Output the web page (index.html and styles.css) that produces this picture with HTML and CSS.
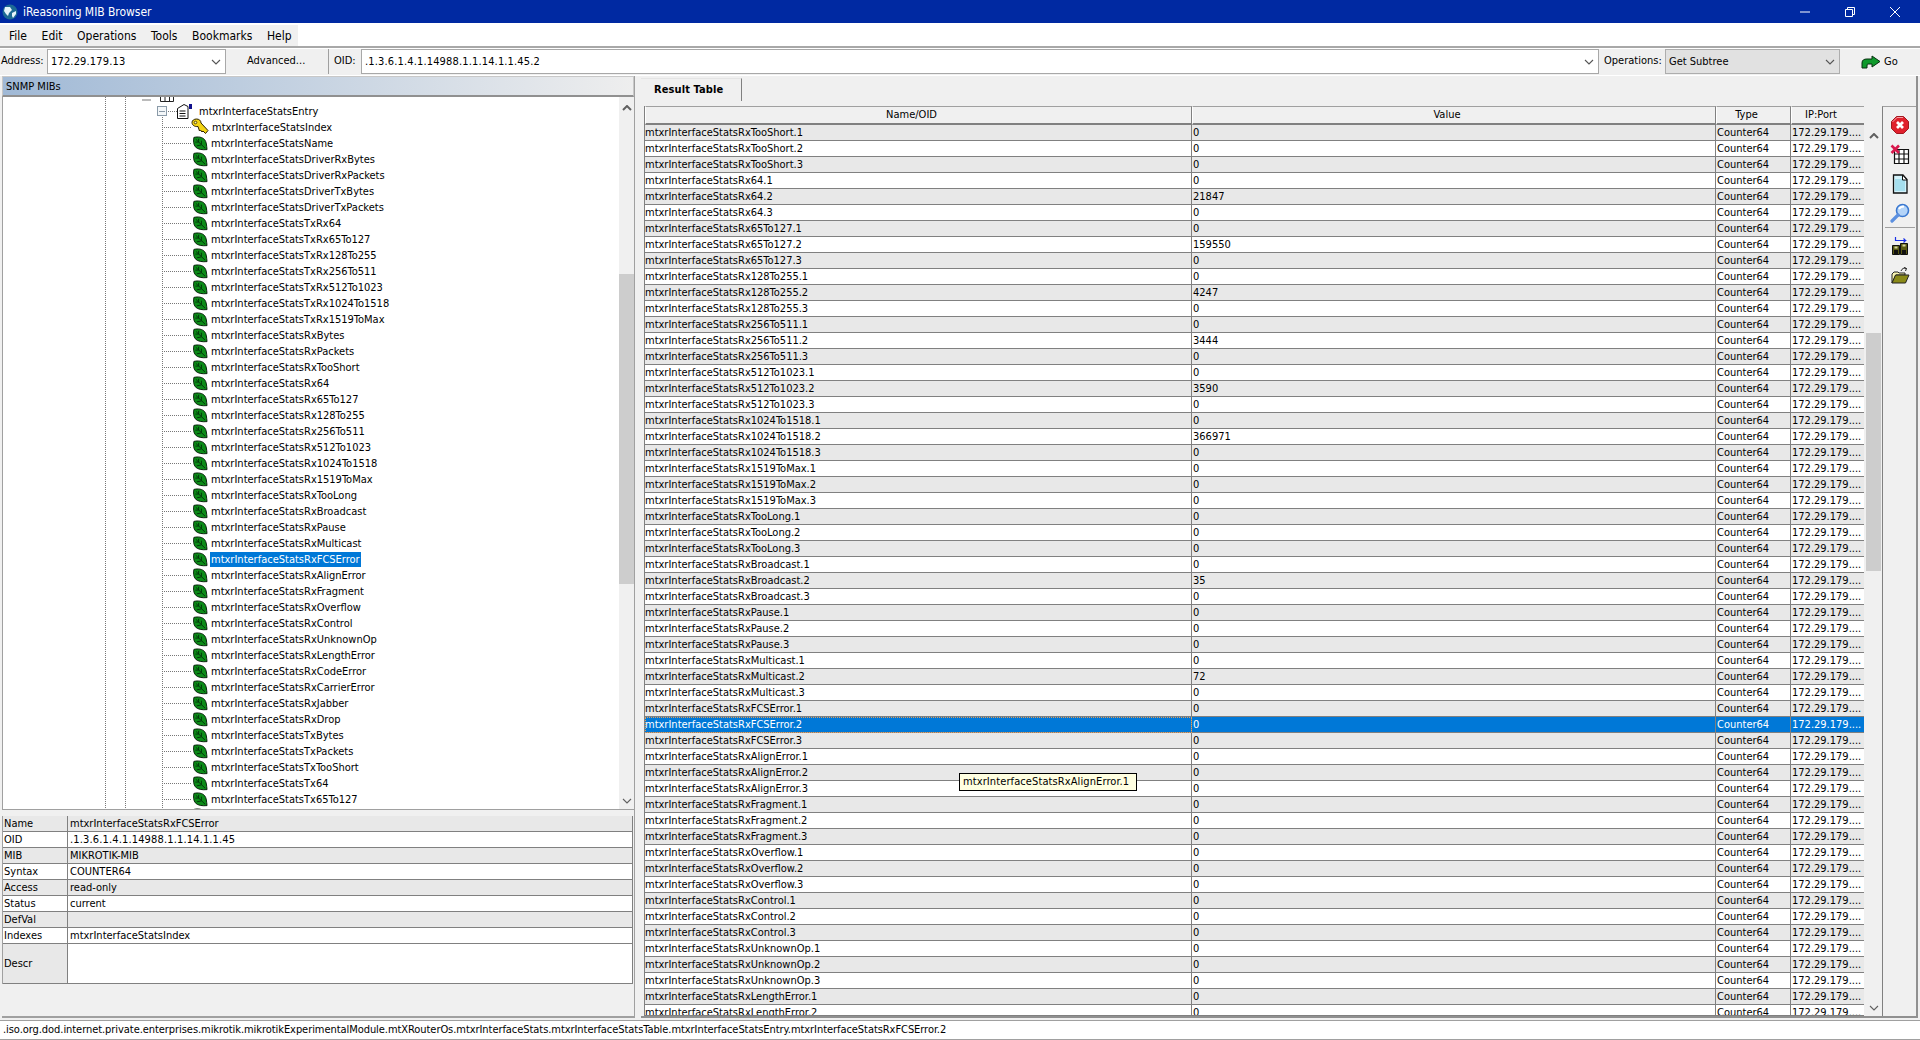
FILE: index.html
```html
<!DOCTYPE html>
<html lang="en">
<head>
<meta charset="utf-8">
<title>iReasoning MIB Browser</title>
<link rel="stylesheet" href="styles.css">
</head>
<body>
<svg class="defs" width="0" height="0" aria-hidden="true">
<symbol id="leaf" viewBox="0 0 16 16"><path d="M1.500 1.500C6 .5 10.500 1 13 4c2 2.500 2 6 2.500 10.500C10.500 15 5.500 14.500 3 11.500 1 9 .8 5 1.500 1.500Z" fill="#0c8c18" stroke="#021a05"/><path d="M3.500 3.500l10 9.500M6.500 6.500V3M9.500 9V5M6.500 6.500H3M9.500 9.500l-5 1" stroke="#02340a" fill="none"/></symbol>
<symbol id="key" viewBox="0 0 18 18"><path d="M1 4.500C1 2.500 3 1 5.500 1S10 2.500 10 5l7 7.500-2.500 3L12 13l-1 1-1.500-2-1 1-1.500-4.500C3.500 9 1 7 1 4.500Z" fill="#f3d413" stroke="#2a2000"/><circle cx="4.500" cy="4.500" r="1.300" fill="#fff8b0" stroke="#5c4a00"/></symbol>
<symbol id="down" viewBox="0 0 10 6"><path d="M1 1l4 4 4-4" fill="none" stroke="currentColor" stroke-width="1.100"/></symbol>
<symbol id="up" viewBox="0 0 10 6"><path d="M1 5l4-4 4 4" fill="none" stroke="currentColor" stroke-width="2"/></symbol>
</svg>

<header class="titlebar">
<svg class="app-icon" viewBox="0 0 16 16"><circle cx="8" cy="8" r="7.500" fill="#1d6a94"/><path d="M3 3l5 0 2 3-3 3-1 3-2-2-2-3zM10 9l4-2 0 3-3 4-1-2z" fill="#e6f4fa"/></svg>
<span class="title-text">iReasoning MIB Browser</span>
<div class="winctl">
<svg viewBox="0 0 12 12"><path d="M1 6h10" stroke="#fff" fill="none"/></svg>
<svg viewBox="0 0 12 12"><path d="M1.500 3.500h7v7h-7zM3.500 3.500v-2h7v7h-2" stroke="#fff" fill="none"/></svg>
<svg viewBox="0 0 12 12"><path d="M1 1l10 10M11 1L1 11" stroke="#fff" fill="none"/></svg>
</div>
</header>

<nav class="menubar">
<div class="menu"><span>File</span><span>Edit</span><span>Operations</span><span>Tools</span><span>Bookmarks</span><span>Help</span></div>
</nav>

<section class="toolbar">
<label class="lbl addr-lbl">Address:</label>
<div class="combo addr"><span class="spaced">172.29.179.13</span><svg class="chev"><use href="#down"/></svg></div>
<div class="advanced">Advanced...</div>
<div class="divider"></div>
<label class="lbl oid-lbl">OID:</label>
<div class="combo oid"><span class="spaced">.1.3.6.1.4.1.14988.1.1.14.1.1.45.2</span><svg class="chev"><use href="#down"/></svg></div>
<label class="lbl ops-lbl">Operations:</label>
<div class="combo ops"><span>Get Subtree</span><svg class="chev"><use href="#down"/></svg></div>
<div class="go">
<svg viewBox="0 0 20 14"><path d="M1 13V8c0-3 2-4 5-4h5V1l8 5.500-8 5.500V9H7c-1 0-1 1-1 4Z" fill="#0f9a2c" stroke="#06300f"/></svg>
<span>Go</span>
</div>
</section>

<main class="main">
<section class="left">
<div class="panel-title">SNMP MIBs</div>
<div class="tree-wrap">
<div class="tree">
<div class="node cut"><span class="minus"></span><svg class="tbl" viewBox="0 0 14 14"><path d="M.5.5h13v13H.5zM.5 7h13M5 .5v13M9.500.5v13" fill="#fff" stroke="#222"/></svg></div>
<div class="node entry"><span class="exp"></span><svg class="entry-ico" viewBox="0 0 18 16"><path d="M1.500 5.500L8 1.500l4 2v12H1.500Z" fill="#fff" stroke="#111"/><path d="M3.500 8h6M3.500 10.500h6M3.500 13h6" stroke="#111"/><path d="M13 1h3v5h-3Z" fill="#10108c"/></svg><span class="nm">mtxrInterfaceStatsEntry</span></div>
<div class="node"><svg class="key"><use href="#key"/></svg><span class="nm idx">mtxrInterfaceStatsIndex</span></div>
<div class="node"><svg class="leaf"><use href="#leaf"/></svg><span class="nm">mtxrInterfaceStatsName</span></div>
<div class="node"><svg class="leaf"><use href="#leaf"/></svg><span class="nm">mtxrInterfaceStatsDriverRxBytes</span></div>
<div class="node"><svg class="leaf"><use href="#leaf"/></svg><span class="nm">mtxrInterfaceStatsDriverRxPackets</span></div>
<div class="node"><svg class="leaf"><use href="#leaf"/></svg><span class="nm">mtxrInterfaceStatsDriverTxBytes</span></div>
<div class="node"><svg class="leaf"><use href="#leaf"/></svg><span class="nm">mtxrInterfaceStatsDriverTxPackets</span></div>
<div class="node"><svg class="leaf"><use href="#leaf"/></svg><span class="nm">mtxrInterfaceStatsTxRx64</span></div>
<div class="node"><svg class="leaf"><use href="#leaf"/></svg><span class="nm">mtxrInterfaceStatsTxRx65To127</span></div>
<div class="node"><svg class="leaf"><use href="#leaf"/></svg><span class="nm">mtxrInterfaceStatsTxRx128To255</span></div>
<div class="node"><svg class="leaf"><use href="#leaf"/></svg><span class="nm">mtxrInterfaceStatsTxRx256To511</span></div>
<div class="node"><svg class="leaf"><use href="#leaf"/></svg><span class="nm">mtxrInterfaceStatsTxRx512To1023</span></div>
<div class="node"><svg class="leaf"><use href="#leaf"/></svg><span class="nm">mtxrInterfaceStatsTxRx1024To1518</span></div>
<div class="node"><svg class="leaf"><use href="#leaf"/></svg><span class="nm">mtxrInterfaceStatsTxRx1519ToMax</span></div>
<div class="node"><svg class="leaf"><use href="#leaf"/></svg><span class="nm">mtxrInterfaceStatsRxBytes</span></div>
<div class="node"><svg class="leaf"><use href="#leaf"/></svg><span class="nm">mtxrInterfaceStatsRxPackets</span></div>
<div class="node"><svg class="leaf"><use href="#leaf"/></svg><span class="nm">mtxrInterfaceStatsRxTooShort</span></div>
<div class="node"><svg class="leaf"><use href="#leaf"/></svg><span class="nm">mtxrInterfaceStatsRx64</span></div>
<div class="node"><svg class="leaf"><use href="#leaf"/></svg><span class="nm">mtxrInterfaceStatsRx65To127</span></div>
<div class="node"><svg class="leaf"><use href="#leaf"/></svg><span class="nm">mtxrInterfaceStatsRx128To255</span></div>
<div class="node"><svg class="leaf"><use href="#leaf"/></svg><span class="nm">mtxrInterfaceStatsRx256To511</span></div>
<div class="node"><svg class="leaf"><use href="#leaf"/></svg><span class="nm">mtxrInterfaceStatsRx512To1023</span></div>
<div class="node"><svg class="leaf"><use href="#leaf"/></svg><span class="nm">mtxrInterfaceStatsRx1024To1518</span></div>
<div class="node"><svg class="leaf"><use href="#leaf"/></svg><span class="nm">mtxrInterfaceStatsRx1519ToMax</span></div>
<div class="node"><svg class="leaf"><use href="#leaf"/></svg><span class="nm">mtxrInterfaceStatsRxTooLong</span></div>
<div class="node"><svg class="leaf"><use href="#leaf"/></svg><span class="nm">mtxrInterfaceStatsRxBroadcast</span></div>
<div class="node"><svg class="leaf"><use href="#leaf"/></svg><span class="nm">mtxrInterfaceStatsRxPause</span></div>
<div class="node"><svg class="leaf"><use href="#leaf"/></svg><span class="nm">mtxrInterfaceStatsRxMulticast</span></div>
<div class="node"><svg class="leaf"><use href="#leaf"/></svg><span class="nm sel">mtxrInterfaceStatsRxFCSError</span></div>
<div class="node"><svg class="leaf"><use href="#leaf"/></svg><span class="nm">mtxrInterfaceStatsRxAlignError</span></div>
<div class="node"><svg class="leaf"><use href="#leaf"/></svg><span class="nm">mtxrInterfaceStatsRxFragment</span></div>
<div class="node"><svg class="leaf"><use href="#leaf"/></svg><span class="nm">mtxrInterfaceStatsRxOverflow</span></div>
<div class="node"><svg class="leaf"><use href="#leaf"/></svg><span class="nm">mtxrInterfaceStatsRxControl</span></div>
<div class="node"><svg class="leaf"><use href="#leaf"/></svg><span class="nm">mtxrInterfaceStatsRxUnknownOp</span></div>
<div class="node"><svg class="leaf"><use href="#leaf"/></svg><span class="nm">mtxrInterfaceStatsRxLengthError</span></div>
<div class="node"><svg class="leaf"><use href="#leaf"/></svg><span class="nm">mtxrInterfaceStatsRxCodeError</span></div>
<div class="node"><svg class="leaf"><use href="#leaf"/></svg><span class="nm">mtxrInterfaceStatsRxCarrierError</span></div>
<div class="node"><svg class="leaf"><use href="#leaf"/></svg><span class="nm">mtxrInterfaceStatsRxJabber</span></div>
<div class="node"><svg class="leaf"><use href="#leaf"/></svg><span class="nm">mtxrInterfaceStatsRxDrop</span></div>
<div class="node"><svg class="leaf"><use href="#leaf"/></svg><span class="nm">mtxrInterfaceStatsTxBytes</span></div>
<div class="node"><svg class="leaf"><use href="#leaf"/></svg><span class="nm">mtxrInterfaceStatsTxPackets</span></div>
<div class="node"><svg class="leaf"><use href="#leaf"/></svg><span class="nm">mtxrInterfaceStatsTxTooShort</span></div>
<div class="node"><svg class="leaf"><use href="#leaf"/></svg><span class="nm">mtxrInterfaceStatsTx64</span></div>
<div class="node"><svg class="leaf"><use href="#leaf"/></svg><span class="nm">mtxrInterfaceStatsTx65To127</span></div>
<div class="node"><svg class="leaf"><use href="#leaf"/></svg></div>
</div>
<div class="vscroll tree-scroll"><svg class="arrow"><use href="#up"/></svg><div class="track"><div class="thumb"></div></div><svg class="arrow"><use href="#down"/></svg></div>
</div>
<div class="split"></div>
<table class="props">
<tr><th>Name</th><td>mtxrInterfaceStatsRxFCSError</td></tr>
<tr><th>OID</th><td><span class="spaced">.1.3.6.1.4.1.14988.1.1.14.1.1.45</span></td></tr>
<tr><th>MIB</th><td>MIKROTIK-MIB</td></tr>
<tr><th>Syntax</th><td>COUNTER64</td></tr>
<tr><th>Access</th><td>read-only</td></tr>
<tr><th>Status</th><td>current</td></tr>
<tr><th>DefVal</th><td></td></tr>
<tr><th>Indexes</th><td>mtxrInterfaceStatsIndex</td></tr>
<tr class="descr"><th>Descr</th><td></td></tr>
</table>
</section>

<section class="right">
<div class="tabs"><div class="tab">Result Table</div></div>
<div class="result">
<div class="tbl-clip">
<table class="results">
<colgroup><col class="c1"><col class="c2"><col class="c3"><col class="c4"></colgroup>
<thead><tr><th>Name/OID</th><th>Value</th><th>Type</th><th>IP:Port</th></tr></thead>
<tbody>
<tr><td>mtxrInterfaceStatsRxTooShort.1</td><td>0</td><td>Counter64</td><td>172.29.179....</td></tr>
<tr><td>mtxrInterfaceStatsRxTooShort.2</td><td>0</td><td>Counter64</td><td>172.29.179....</td></tr>
<tr><td>mtxrInterfaceStatsRxTooShort.3</td><td>0</td><td>Counter64</td><td>172.29.179....</td></tr>
<tr><td>mtxrInterfaceStatsRx64.1</td><td>0</td><td>Counter64</td><td>172.29.179....</td></tr>
<tr><td>mtxrInterfaceStatsRx64.2</td><td>21847</td><td>Counter64</td><td>172.29.179....</td></tr>
<tr><td>mtxrInterfaceStatsRx64.3</td><td>0</td><td>Counter64</td><td>172.29.179....</td></tr>
<tr><td>mtxrInterfaceStatsRx65To127.1</td><td>0</td><td>Counter64</td><td>172.29.179....</td></tr>
<tr><td>mtxrInterfaceStatsRx65To127.2</td><td>159550</td><td>Counter64</td><td>172.29.179....</td></tr>
<tr><td>mtxrInterfaceStatsRx65To127.3</td><td>0</td><td>Counter64</td><td>172.29.179....</td></tr>
<tr><td>mtxrInterfaceStatsRx128To255.1</td><td>0</td><td>Counter64</td><td>172.29.179....</td></tr>
<tr><td>mtxrInterfaceStatsRx128To255.2</td><td>4247</td><td>Counter64</td><td>172.29.179....</td></tr>
<tr><td>mtxrInterfaceStatsRx128To255.3</td><td>0</td><td>Counter64</td><td>172.29.179....</td></tr>
<tr><td>mtxrInterfaceStatsRx256To511.1</td><td>0</td><td>Counter64</td><td>172.29.179....</td></tr>
<tr><td>mtxrInterfaceStatsRx256To511.2</td><td>3444</td><td>Counter64</td><td>172.29.179....</td></tr>
<tr><td>mtxrInterfaceStatsRx256To511.3</td><td>0</td><td>Counter64</td><td>172.29.179....</td></tr>
<tr><td>mtxrInterfaceStatsRx512To1023.1</td><td>0</td><td>Counter64</td><td>172.29.179....</td></tr>
<tr><td>mtxrInterfaceStatsRx512To1023.2</td><td>3590</td><td>Counter64</td><td>172.29.179....</td></tr>
<tr><td>mtxrInterfaceStatsRx512To1023.3</td><td>0</td><td>Counter64</td><td>172.29.179....</td></tr>
<tr><td>mtxrInterfaceStatsRx1024To1518.1</td><td>0</td><td>Counter64</td><td>172.29.179....</td></tr>
<tr><td>mtxrInterfaceStatsRx1024To1518.2</td><td>366971</td><td>Counter64</td><td>172.29.179....</td></tr>
<tr><td>mtxrInterfaceStatsRx1024To1518.3</td><td>0</td><td>Counter64</td><td>172.29.179....</td></tr>
<tr><td>mtxrInterfaceStatsRx1519ToMax.1</td><td>0</td><td>Counter64</td><td>172.29.179....</td></tr>
<tr><td>mtxrInterfaceStatsRx1519ToMax.2</td><td>0</td><td>Counter64</td><td>172.29.179....</td></tr>
<tr><td>mtxrInterfaceStatsRx1519ToMax.3</td><td>0</td><td>Counter64</td><td>172.29.179....</td></tr>
<tr><td>mtxrInterfaceStatsRxTooLong.1</td><td>0</td><td>Counter64</td><td>172.29.179....</td></tr>
<tr><td>mtxrInterfaceStatsRxTooLong.2</td><td>0</td><td>Counter64</td><td>172.29.179....</td></tr>
<tr><td>mtxrInterfaceStatsRxTooLong.3</td><td>0</td><td>Counter64</td><td>172.29.179....</td></tr>
<tr><td>mtxrInterfaceStatsRxBroadcast.1</td><td>0</td><td>Counter64</td><td>172.29.179....</td></tr>
<tr><td>mtxrInterfaceStatsRxBroadcast.2</td><td>35</td><td>Counter64</td><td>172.29.179....</td></tr>
<tr><td>mtxrInterfaceStatsRxBroadcast.3</td><td>0</td><td>Counter64</td><td>172.29.179....</td></tr>
<tr><td>mtxrInterfaceStatsRxPause.1</td><td>0</td><td>Counter64</td><td>172.29.179....</td></tr>
<tr><td>mtxrInterfaceStatsRxPause.2</td><td>0</td><td>Counter64</td><td>172.29.179....</td></tr>
<tr><td>mtxrInterfaceStatsRxPause.3</td><td>0</td><td>Counter64</td><td>172.29.179....</td></tr>
<tr><td>mtxrInterfaceStatsRxMulticast.1</td><td>0</td><td>Counter64</td><td>172.29.179....</td></tr>
<tr><td>mtxrInterfaceStatsRxMulticast.2</td><td>72</td><td>Counter64</td><td>172.29.179....</td></tr>
<tr><td>mtxrInterfaceStatsRxMulticast.3</td><td>0</td><td>Counter64</td><td>172.29.179....</td></tr>
<tr><td>mtxrInterfaceStatsRxFCSError.1</td><td>0</td><td>Counter64</td><td>172.29.179....</td></tr>
<tr class="selected"><td class="focus">mtxrInterfaceStatsRxFCSError.2</td><td>0</td><td>Counter64</td><td>172.29.179....</td></tr>
<tr><td>mtxrInterfaceStatsRxFCSError.3</td><td>0</td><td>Counter64</td><td>172.29.179....</td></tr>
<tr><td>mtxrInterfaceStatsRxAlignError.1</td><td>0</td><td>Counter64</td><td>172.29.179....</td></tr>
<tr><td>mtxrInterfaceStatsRxAlignError.2</td><td>0</td><td>Counter64</td><td>172.29.179....</td></tr>
<tr><td>mtxrInterfaceStatsRxAlignError.3</td><td>0</td><td>Counter64</td><td>172.29.179....</td></tr>
<tr><td>mtxrInterfaceStatsRxFragment.1</td><td>0</td><td>Counter64</td><td>172.29.179....</td></tr>
<tr><td>mtxrInterfaceStatsRxFragment.2</td><td>0</td><td>Counter64</td><td>172.29.179....</td></tr>
<tr><td>mtxrInterfaceStatsRxFragment.3</td><td>0</td><td>Counter64</td><td>172.29.179....</td></tr>
<tr><td>mtxrInterfaceStatsRxOverflow.1</td><td>0</td><td>Counter64</td><td>172.29.179....</td></tr>
<tr><td>mtxrInterfaceStatsRxOverflow.2</td><td>0</td><td>Counter64</td><td>172.29.179....</td></tr>
<tr><td>mtxrInterfaceStatsRxOverflow.3</td><td>0</td><td>Counter64</td><td>172.29.179....</td></tr>
<tr><td>mtxrInterfaceStatsRxControl.1</td><td>0</td><td>Counter64</td><td>172.29.179....</td></tr>
<tr><td>mtxrInterfaceStatsRxControl.2</td><td>0</td><td>Counter64</td><td>172.29.179....</td></tr>
<tr><td>mtxrInterfaceStatsRxControl.3</td><td>0</td><td>Counter64</td><td>172.29.179....</td></tr>
<tr><td>mtxrInterfaceStatsRxUnknownOp.1</td><td>0</td><td>Counter64</td><td>172.29.179....</td></tr>
<tr><td>mtxrInterfaceStatsRxUnknownOp.2</td><td>0</td><td>Counter64</td><td>172.29.179....</td></tr>
<tr><td>mtxrInterfaceStatsRxUnknownOp.3</td><td>0</td><td>Counter64</td><td>172.29.179....</td></tr>
<tr><td>mtxrInterfaceStatsRxLengthError.1</td><td>0</td><td>Counter64</td><td>172.29.179....</td></tr>
<tr><td>mtxrInterfaceStatsRxLengthError.2</td><td>0</td><td>Counter64</td><td>172.29.179....</td></tr>
</tbody>
</table>
<div class="tooltip">mtxrInterfaceStatsRxAlignError.1</div>
</div>
<div class="vscroll tbl-scroll"><svg class="arrow"><use href="#up"/></svg><div class="track"><div class="thumb"></div></div><svg class="arrow"><use href="#down"/></svg></div>
<aside class="tools">
<svg viewBox="0 0 20 20"><path d="M6.500 1.500h7l5 5v7l-5 5h-7l-5-5v-7Z" fill="#e0202c" stroke="#a01820"/><path d="M2.500 7l4.500-4.500h6" stroke="#f4a0a4" fill="none"/><path d="M7 7l6 6M13 7l-6 6" stroke="#fff" stroke-width="2.800"/></svg>
<svg viewBox="0 0 20 20"><path d="M4.500 5.500h14v14h-14zM4.500 10h14M4.500 15h14M9 5.500v14M14 5.500v14" fill="#fff" stroke="#111" stroke-width="1.200"/><path d="M1.500 1.500l7.500 7.500M9 1.500L1.500 9" stroke="#d8184c" stroke-width="2.600"/></svg>
<svg viewBox="0 0 20 20"><path d="M3.500 1h9.500l4 4.500V19H3.500Z" fill="#d4f2fa" stroke="#111" stroke-width="1.300"/><path d="M5 6h10M5 8h10M5 10h10M5 12h10M5 14h10M5 16h10" stroke="#78cce2"/><path d="M12.500 1v5H17Z" fill="#fff" stroke="#111"/></svg>
<svg viewBox="0 0 20 20"><circle cx="12.500" cy="7.500" r="6" fill="#b4d4f8" stroke="#3a78d0" stroke-width="1.600"/><path d="M9 6c1-2 3-2.500 5-2.500" stroke="#fff" stroke-width="1.800" fill="none"/><path d="M8 12l-6 6" stroke="#5c90e0" stroke-width="3.200" stroke-linecap="round"/></svg>
<div class="tool-sep"></div>
<svg viewBox="0 0 20 20"><path d="M2.500 9.500h7v9h-7zM10.500 7.500h7v11h-7z" fill="#5a5a14" stroke="#111"/><path d="M4 14h4v4H4zM12 14h4v4h-4z" fill="#111"/><path d="M4.500 10.500h3v2h-3zM12.500 8.500h3v2h-3z" fill="#d8d8a0"/><path d="M5.500 1v3.500h10l-2-2M15.500 4.500l-2 2" stroke="#1a30e8" fill="none" stroke-width="1.200"/></svg>
<svg viewBox="0 0 20 20"><path d="M2 8l2-2h4l1 1h6v2H6L2 17Z" fill="#f8f4b0" stroke="#222"/><path d="M2 17l3.500-8H19l-3.500 8Z" fill="#8a8a18" stroke="#222"/><path d="M11 5c1-2.500 3-3.500 5.500-2.500M16.500 2.500l-1 2.500M16.500 2.500L14 1.500" stroke="#222" fill="none"/></svg>
</aside>
</div>
</section>
</main>

<footer class="status"><span>.iso.org.dod.internet.private.enterprises.mikrotik.mikrotikExperimentalModule.mtXRouterOs.mtxrInterfaceStats.mtxrInterfaceStatsTable.mtxrInterfaceStatsEntry.mtxrInterfaceStatsRxFCSError.2</span></footer>
</body>
</html>
```

FILE: styles.css
```css
* { box-sizing: border-box; }
html, body { margin: 0; padding: 0; }
body {
  width: 1920px;
  height: 1040px;
  overflow: hidden;
  display: flex;
  flex-direction: column;
  background: #f0f0f0;
  color: #000;
  font-family: "DejaVu Sans Condensed", "DejaVu Sans", sans-serif;
  font-size: 11px;
  line-height: 16px;
}
.defs { position: absolute; }
.spaced { letter-spacing: .15px; }

.titlebar {
  height: 23px;
  flex: none;
  background: #0029a2;
  color: #fff;
  display: flex;
  align-items: center;
  padding-left: 2px;
  font-size: 12px;
}
.app-icon { width: 16px; height: 16px; margin-right: 5px; }
.title-text { flex: 1; letter-spacing: -.05px; }
.winctl { display: flex; gap: 33px; padding-right: 19px; }
.winctl svg { width: 12px; height: 12px; }

.menubar {
  height: 26px;
  flex: none;
  background: #fff;
  padding-top: 2px;
  border-bottom: 1px solid #fff;
  box-shadow: inset 0 -2px 0 #a8a8a8;
}
.menu {
  width: 298px;
  height: 21px;
  background: #f0f0f0;
  display: flex;
  align-items: center;
  padding-left: 9px;
  gap: 14.6px;
  font-size: 12px;
}

.toolbar {
  height: 27px;
  flex: none;
  display: flex;
  align-items: stretch;
  background: #f0f0f0;
  font-size: 11px;
  border-bottom: 1px solid #fff;
}
.lbl { line-height: 24px; }
.addr-lbl { width: 47px; padding-left: 1px; }
.combo {
  display: flex;
  align-items: center;
  justify-content: space-between;
  height: 25px;
  background: #fff;
  border: 1px solid #a8a8a8;
  padding: 0 4px 0 3px;
}
.chev { width: 10px; height: 6px; color: #555; }
.addr { width: 179px; }
.advanced { width: 102px; padding-left: 21px; line-height: 24px; }
.divider { width: 1px; height: 25px; background: #a0a0a0; }
.oid-lbl { width: 32px; padding-left: 5px; }
.oid { width: 1238px; }
.ops-lbl { width: 66px; padding-left: 5px; }
.ops { width: 175px; background: #e1e1e1; border-color: #adadad; }
.go { display: flex; align-items: center; gap: 3px; padding-left: 21px; height: 25px; }
.go svg { width: 20px; height: 14px; }

.main {
  flex: none;
  height: 944px;
  display: flex;
  align-items: stretch;
  padding: 0 2px 2px 2px;
}

.left {
  width: 633px;
  display: flex;
  flex-direction: column;
  border-bottom: 2px solid #a0a0a0;
  border-right: 1px solid #a0a0a0;
}
.panel-title {
  height: 21px;
  flex: none;
  padding-left: 3px;
  line-height: 20px;
  background: linear-gradient(to right, #a0b9d6, #eeeeee);
  border: 1px solid #c8c8c8;
  border-bottom: 2px solid #909090;
}
.tree-wrap {
  height: 713px;
  flex: none;
  display: flex;
  background: #fff;
  border-left: 1px solid #a0a0a0;
  border-bottom: 1px solid #a0a0a0;
  overflow: hidden;
}
.tree {
  flex: 1;
  overflow: hidden;
  background-image:
    repeating-linear-gradient(to bottom, #777 0 1px, transparent 1px 2px),
    repeating-linear-gradient(to bottom, #777 0 1px, transparent 1px 2px),
    repeating-linear-gradient(to bottom, #777 0 1px, transparent 1px 2px);
  background-size: 1px 100%;
  background-repeat: no-repeat;
  background-position: 102px 0, 122px 0, 159px 14px;
}
.node {
  height: 16px;
  display: flex;
  align-items: center;
  padding-left: 159px;
  background-image: repeating-linear-gradient(to right, #777 0 1px, transparent 1px 2px);
  background-size: 30px 1px;
  background-position: 159px 8px;
  background-repeat: no-repeat;
  white-space: nowrap;
}
.cut {
  margin-top: -10px;
  background: none;
  padding-left: 139px;
}
.minus { width: 9px; height: 2px; background: #bbb; margin: 10px 9px 0 0; }
.tbl { width: 14px; height: 14px; }
.entry {
  background-size: 12px 1px;
  background-position: 165px 8px;
  padding-left: 154px;
}
.exp {
  width: 10px;
  height: 10px;
  flex: none;
  background: linear-gradient(#8a9aa8, #8a9aa8) center / 6px 1px no-repeat, #f4f7f9;
  border: 1px solid #8a9aa8;
  margin-right: 9px;
}
.entry-ico { width: 18px; height: 16px; flex: none; margin-right: 3px; }
.leaf { width: 16px; height: 15px; flex: none; margin: 0 0 0 30px; }
.key { width: 18px; height: 18px; flex: none; margin: 0 0 0 29px; }
.nm { padding: 0 1px; margin-left: 2px; line-height: 15px; }
.entry .nm { margin-left: 1px; }
.idx { margin-left: 2px; }
.sel { background: #0078d7; color: #fff; }

.vscroll {
  flex: none;
  display: flex;
  flex-direction: column;
  align-items: stretch;
  background: #f0f0f0;
}
.arrow { width: 10px; height: 6px; color: #606060; align-self: center; margin: 8px 0 5px; flex: none; }
.track { flex: 1; }
.thumb { background: #cdcdcd; }
.tree-scroll { width: 15px; }
.tree-scroll .thumb { margin-top: 158px; height: 310px; }
.tbl-scroll { width: 18px; padding-right: 1px; padding-left: 2px; margin-top: 19px; }
.tbl-scroll .arrow { color: #606060; }
.tbl-scroll .thumb { margin-top: 189px; height: 238px; }

.split { height: 6px; flex: none; background: #f0f0f0; }

.props {
  flex: none;
  width: 631px;
  margin-left: 0;
  border-collapse: separate;
  border-spacing: 0;
  table-layout: fixed;
  background: #fff;
  border-left: 1px solid #a0a0a0;
}
.props th, .props td {
  height: 16px;
  padding: 0;
  font-weight: normal;
  text-align: left;
  border-bottom: 1px solid #808080;
  border-right: 1px solid #808080;
  line-height: 15px;
  overflow: hidden;
  white-space: nowrap;
}
.props th { width: 65px; padding-left: 1px; }
.props td { padding-left: 2px; }
.props tr:nth-child(odd) th, .props tr:nth-child(odd) td { background: #e8e8e8; }
.props tr.descr th { background: #e8e8e8; height: 40px; }
.props tr.descr td { background: #fff; }

.right {
  flex: 1;
  min-width: 0;
  display: flex;
  flex-direction: column;
  margin-left: 6px;
  border-right: 2px solid #909090;
  border-bottom: 2px solid #909090;
}
.tabs { height: 30px; flex: none; padding-top: 2px; }
.tab {
  width: 101px;
  height: 23px;
  line-height: 21px;
  padding-left: 13px;
  font-weight: bold;
  letter-spacing: .1px;
  border-right: 1px solid #808080;
  border-top: 1px solid #e4e4e4;
}
.result { flex: 1; min-height: 0; display: flex; }
.tbl-clip {
  position: relative;
  width: 1220px;
  margin-left: 3px;
  overflow: hidden;
  background: #f0f0f0;
  border-bottom: 1px solid #808080;
}
.results {
  border-collapse: separate;
  border-spacing: 0;
  table-layout: fixed;
  width: 1220px;
  border-left: 1px solid #808080;
}
.c1 { width: 547px; }
.c2 { width: 524px; }
.c3 { width: 75px; }
.c4 { width: 74px; }
.results th {
  height: 18px;
  font-weight: normal;
  padding: 0 14px 0 0;
  line-height: 16px;
  text-align: center;
  background: #f0f0f0;
  border-top: 1px solid #a0a0a0;
  border-left: 1px solid #fff;
  border-right: 1px solid #808080;
  border-bottom: 2px solid #808080;
}
.results td {
  height: 16px;
  padding: 0 0 0 1px;
  line-height: 15px;
  white-space: nowrap;
  overflow: hidden;
  background: #fff;
  border-bottom: 1px solid #808080;
  border-right: 1px solid #808080;
}
.results td:first-child { padding-left: 0; }
.results tbody tr:nth-child(odd) td { background: #e8e8e8; }
.results tbody tr.selected td { background: #0078d7; color: #fff; }
.results td.focus { outline: 1px dotted #e0a060; outline-offset: -1px; }
.tooltip {
  position: absolute;
  left: 315px;
  top: 667px;
  width: 178px;
  height: 18px;
  padding-left: 3px;
  line-height: 16px;
  letter-spacing: .1px;
  background: #ffffe1;
  border: 1px solid #000;
  white-space: nowrap;
}
.tools {
  flex: 1;
  display: flex;
  flex-direction: column;
  align-items: center;
  gap: 9px;
  padding-top: 8px;
  border-left: 1px solid #808080;
  border-top: 1px solid #a0a0a0;
}
.tools svg { width: 20px; height: 20px; flex: none; }
.tools svg:nth-child(3), .tools svg:nth-child(7) { margin-top: 1px; }
.tool-sep { width: 30px; height: 1px; background: #a0a0a0; margin: -5px 0 -1px; flex: none; }

.status {
  height: 20px;
  flex: none;
  padding-left: 3px;
  line-height: 18px;
  letter-spacing: -.06px;
  background: #fff;
  border-top: 1px solid #a0a0a0;
  border-bottom: 1px solid #a0a0a0;
  white-space: nowrap;
}
```
